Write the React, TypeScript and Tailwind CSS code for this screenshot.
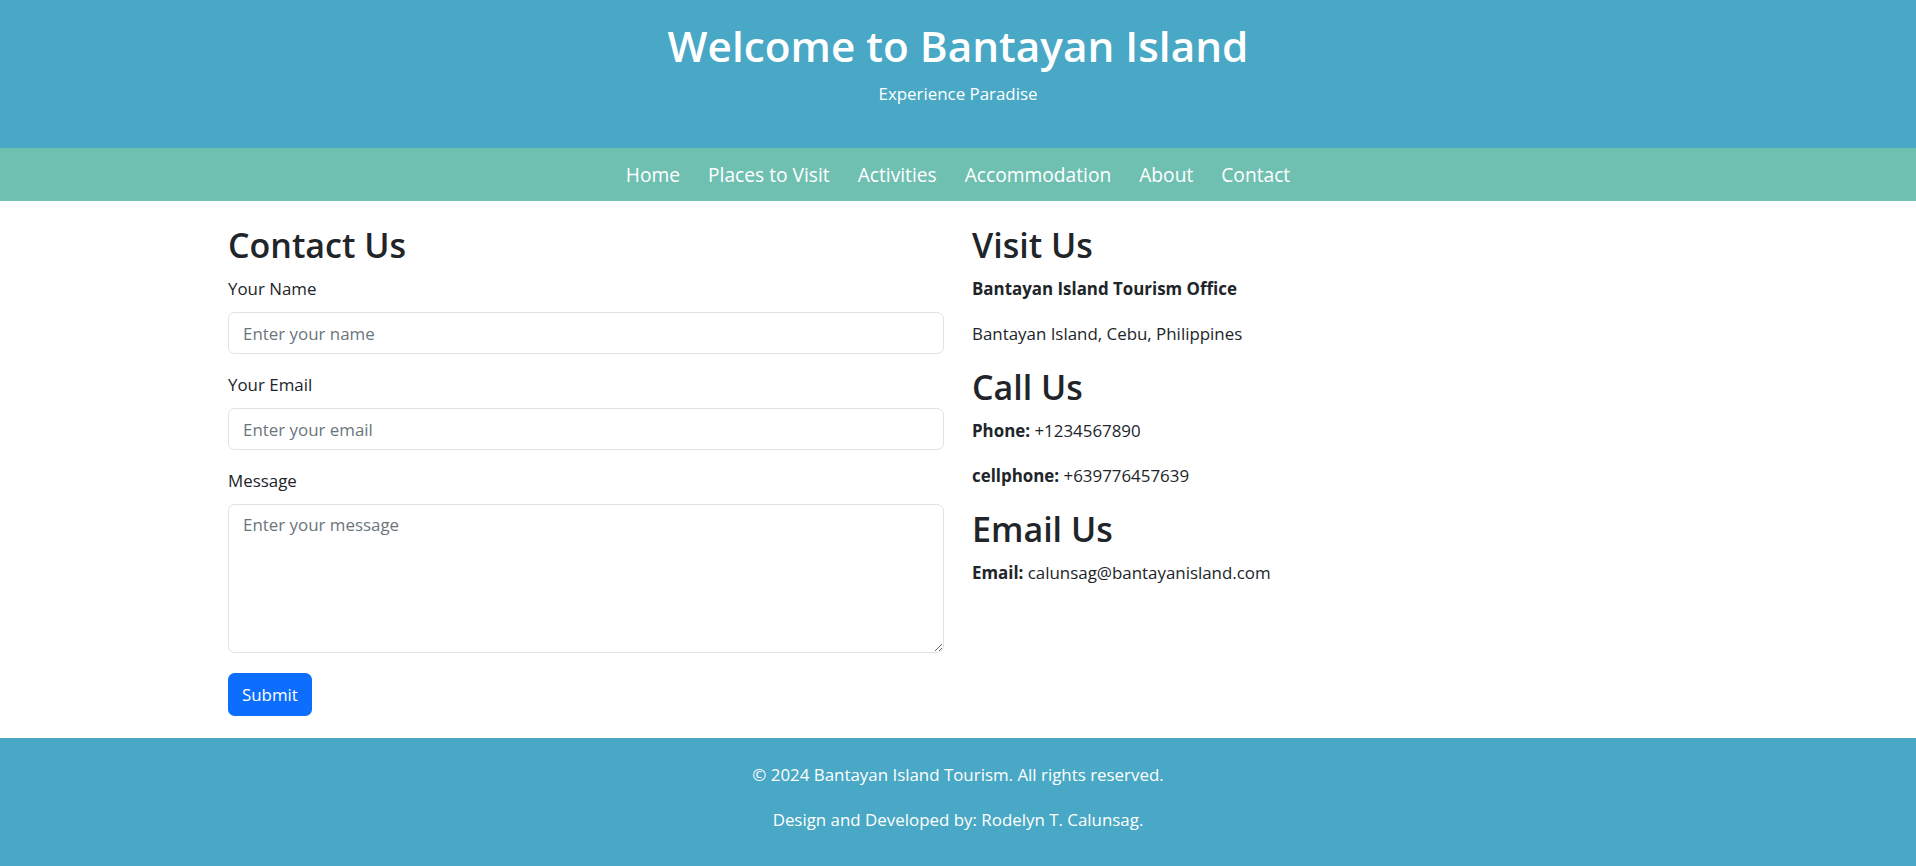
import React from "react";

const navLinks = ["Home", "Places to Visit", "Activities", "Accommodation", "About", "Contact"];

const Field = ({ label, placeholder, type = "text" }: { label: string; placeholder: string; type?: string }) => (
  <div className="mb-[18px]">
    <label className="block text-[16.9px] leading-[26px] mb-[10px]">{label}</label>
    <input
      type={type}
      placeholder={placeholder}
      className="block w-full h-[42px] px-[14px] text-[16.9px] border border-[#dee2e6] rounded-[6.6px] outline-none placeholder:text-[#6c757d]"
    />
  </div>
);

const App = () => {
  return (
    <div className="font-['Open_Sans',sans-serif] text-[#212529] bg-white">
      <header className="bg-[#48a8c5] h-[148px] pt-[19px] text-center text-white">
        <h1 className="text-[42.3px] leading-[53px] font-semibold mb-[9px]">Welcome to Bantayan Island</h1>
        <p className="text-[16.9px] leading-[26px]">Experience Paradise</p>
      </header>

      <nav className="bg-[#70c0b2] h-[53px] flex items-center justify-center gap-[28px]">
        {navLinks.map((link) => (
          <a key={link} href="#" className="text-white text-[19.2px] leading-[30px]">
            {link}
          </a>
        ))}
      </nav>

      <main className="w-[1460px] mx-auto pt-[23px] pb-[22px] grid grid-cols-2 gap-x-[28px]">
        <section>
          <h2 className="text-[34px] leading-[42px] font-semibold mb-[10px]">Contact Us</h2>
          <form onSubmit={(e) => e.preventDefault()}>
            <Field label="Your Name" placeholder="Enter your name" />
            <Field label="Your Email" placeholder="Enter your email" type="email" />
            <div className="mb-[20px]">
              <label className="block text-[16.9px] leading-[26px] mb-[10px]">Message</label>
              <textarea
                placeholder="Enter your message"
                className="block w-full h-[149px] px-[14px] py-[7px] text-[16.9px] leading-[26px] border border-[#dee2e6] rounded-[6.6px] outline-none placeholder:text-[#6c757d]"
              />
            </div>
            <button
              type="submit"
              className="h-[43px] px-[14px] bg-[#0d6efd] text-white text-[16.9px] rounded-[6.6px]"
            >
              Submit
            </button>
          </form>
        </section>

        <section className="text-[16.9px] leading-[26px]">
          <h2 className="text-[34px] leading-[42px] font-semibold mb-[10px]">Visit Us</h2>
          <p className="font-bold mb-[19px]">Bantayan Island Tourism Office</p>
          <p className="mb-[19px]">Bantayan Island, Cebu, Philippines</p>

          <h2 className="text-[34px] leading-[42px] font-semibold mb-[10px]">Call Us</h2>
          <p className="mb-[19px]">
            <strong>Phone:</strong> +1234567890
          </p>
          <p className="mb-[19px]">
            <strong>cellphone:</strong> +639776457639
          </p>

          <h2 className="text-[34px] leading-[42px] font-semibold mb-[10px]">Email Us</h2>
          <p>
            <strong>Email:</strong> calunsag@bantayanisland.com
          </p>
        </section>
      </main>

      <footer className="bg-[#48a8c5] pt-[24px] pb-[24px] text-center text-white text-[16.9px] leading-[26px]">
        <p className="mb-[19px]">&copy; 2024 Bantayan Island Tourism. All rights reserved.</p>
        <p className="mb-[19px]">Design and Developed by: Rodelyn T. Calunsag.</p>
      </footer>
    </div>
  );
};

export default App;
